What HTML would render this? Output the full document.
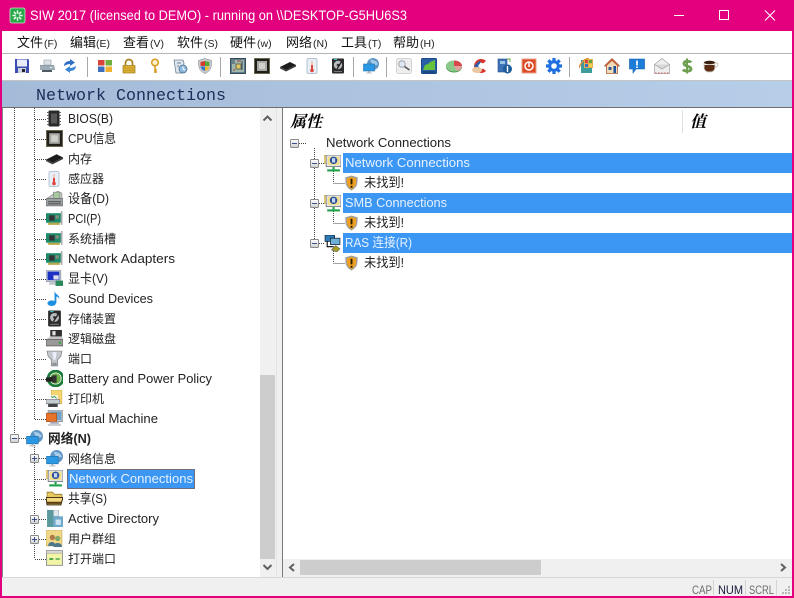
<!DOCTYPE html>
<html><head><meta charset="utf-8"><title>SIW</title>
<style>
html,body{margin:0;padding:0;background:#fff;overflow:hidden;width:794px;height:598px}
svg{display:block}
text{font-family:"Liberation Sans","Noto Sans CJK SC",sans-serif;font-size:13px;fill:#222;white-space:pre}
.c{font-family:"Noto Sans CJK SC","Liberation Sans",sans-serif;font-size:12px}
.m{font-family:"Noto Sans CJK SC","Liberation Sans",sans-serif;font-size:13px;fill:#111}
.ms{font-size:10.5px;fill:#222}
.w{fill:#e6f2ff}
.dot{stroke:#444;stroke-width:1;stroke-dasharray:1 1;fill:none}
</style></head><body>
<svg width="794" height="598" viewBox="0 0 794 598" xmlns="http://www.w3.org/2000/svg">
<defs>
<linearGradient id="band" x1="0" x2="1" y1="0" y2="0"><stop offset="0" stop-color="#a3bbd8"/><stop offset="1" stop-color="#b6cee8"/></linearGradient>
<linearGradient id="bx" x1="0" x2="0" y1="0" y2="1"><stop offset="0" stop-color="#fff"/><stop offset="1" stop-color="#cfcfcf"/></linearGradient>
<symbol id="minus" viewBox="0 0 9 9"><rect x=".5" y=".5" width="8" height="8" rx="1" fill="url(#bx)" stroke="#8a8a8a"/><path d="M2 4.5h5" stroke="#3a4f8a"/></symbol>
<symbol id="plus" viewBox="0 0 9 9"><rect x=".5" y=".5" width="8" height="8" rx="1" fill="url(#bx)" stroke="#8a8a8a"/><path d="M2 4.5h5M4.500 2v5" stroke="#3a4f8a"/></symbol>

<symbol id="floppy" viewBox="0 0 16 16"><path d="M1 1h13l1 1v13H1z" fill="#3c4cb4"/><rect x="3" y="1.500" width="10" height="7" fill="#e8ecf8"/><rect x="4" y="10" width="8" height="5" fill="#cfd3df"/><rect x="8" y="11" width="3" height="3" fill="#223"/></symbol>
<symbol id="printer" viewBox="0 0 16 16"><path d="M5 2h7v5H5z" fill="#dfe3e8" stroke="#8b949c" stroke-width=".6"/><path d="M1 7h14l1 5H1z" fill="#8d9ba8"/><path d="M1 8h14v4H1z" fill="#9eacb8"/><path d="M3 12h10v2H3z" fill="#4f5a64"/><rect x="11" y="9" width="2" height="1" fill="#dfe"/></symbol>
<symbol id="refresh" viewBox="0 0 16 16"><path d="M2 8c0-3.500 3-5 6-5V1l5 3.500L8 8V6C6 6 4 7 2 8z" fill="#2f6fc4"/><path d="M14 8c0 3.500-3 5-6 5v2l-5-3.500L8 8v2c2 0 4-1 6-2z" fill="#3c86d8"/></symbol>
<symbol id="winflag" viewBox="0 0 16 16"><rect x="1" y="2" width="6.500" height="5.500" fill="#d8443a"/><rect x="8.500" y="2" width="6.500" height="5.500" fill="#6fae3c"/><rect x="1" y="8.500" width="6.500" height="5.500" fill="#3d6fc0"/><rect x="8.500" y="8.500" width="6.500" height="5.500" fill="#f0b030"/></symbol>
<symbol id="lock" viewBox="0 0 16 16"><path d="M4.500 8V5a3.500 3.500 0 0 1 7 0v3" fill="none" stroke="#a88420" stroke-width="1.700"/><rect x="2" y="7.500" width="12" height="7.500" fill="#dcae33" stroke="#a07c1c" stroke-width=".7"/><path d="M2 10h12M2 12.500h12" stroke="#b08a20" stroke-width=".6"/></symbol>
<symbol id="key" viewBox="0 0 16 16"><circle cx="8" cy="4.500" r="3.300" fill="#fff2c8" stroke="#d89a20" stroke-width="1.500"/><path d="M8 8v7M8 12h2M8 14h2" stroke="#d89a20" stroke-width="1.600" fill="none"/></symbol>
<symbol id="clean" viewBox="0 0 16 16"><path d="M2 2h9l1 3-1 10H4z" fill="#dfe7ee" stroke="#6f8296" stroke-width=".8"/><circle cx="11" cy="11" r="4" fill="#8fb9dc" stroke="#47698c" stroke-width=".7"/><path d="M11 8.500V11l2 1" stroke="#fff" fill="none"/><path d="M5 5h4M5 8h2" stroke="#6f8296"/></symbol>
<symbol id="shield" viewBox="0 0 16 16"><path d="M8 .5l6.500 2c0 6 0 10-6.500 13-6.500-3-6.500-7-6.500-13z" fill="#c8ccd2" stroke="#777" stroke-width=".5"/><path d="M8 3v5H3.500V4z" fill="#d63a30"/><path d="M8 3l4.500 1v4H8z" fill="#5aa83a"/><path d="M3.500 8.500H8V13c-3-1-4-2.500-4.500-4.500z" fill="#3576c8"/><path d="M8 8.500h4.500C12 10.500 11 12 8 13z" fill="#eeb72c"/></symbol>
<symbol id="board" viewBox="0 0 16 16"><rect x=".5" y=".5" width="15" height="15" fill="#5a7c8c" stroke="#3c4a58"/><rect x="2" y="2" width="12" height="12" fill="#9fb6a8"/><rect x="6" y="6" width="5" height="5" fill="#e0c860" stroke="#665"/><path d="M2 3h3M2 5h3M12 3v9" stroke="#354a68"/><path d="M3 12h2M7 3h4" stroke="#a04040"/></symbol>
<symbol id="cpu" viewBox="0 0 16 16"><rect x=".5" y=".5" width="15" height="15" fill="#1f1f1a" stroke="#6a6650"/><rect x="3" y="3" width="10" height="10" fill="#a8a8a4"/><rect x="5" y="5" width="6" height="6" fill="#d0d0cc"/></symbol>
<symbol id="ram" viewBox="0 0 16 16"><path d="M0 9l10-5 6 3-10 5z" fill="#1c1c1c"/><path d="M0 9l6 3v1.500L0 10.500z" fill="#444"/><path d="M6 12l10-5v1.500l-10 5z" fill="#333"/></symbol>
<symbol id="sensor" viewBox="0 0 16 16"><rect x="3" y="0.500" width="10" height="15" rx="1.500" fill="#e6eef6" stroke="#b8c4d4"/><rect x="7" y="3" width="2" height="8" fill="#f4c4c0"/><rect x="7" y="7" width="2" height="5" fill="#e0443a"/><circle cx="8" cy="12.500" r="1.800" fill="#e0443a"/></symbol>
<symbol id="hdd" viewBox="0 0 16 16"><rect x="2" y=".5" width="12" height="15" rx="1" fill="#2c2c2c"/><circle cx="8" cy="7" r="4.200" fill="#b8bcc0"/><circle cx="8" cy="7" r="1.300" fill="#333"/><path d="M12 3L7 11" stroke="#222" stroke-width="1.300"/><rect x="4" y="1" width="3" height="1" fill="#3cc"/><rect x="4" y="13" width="8" height="1" fill="#777"/></symbol>
<symbol id="net" viewBox="0 0 16 16"><circle cx="10" cy="6" r="6" fill="#5f96c6"/><path d="M7 1.500c3 .5 7 1 8 5l-5 1z" fill="#a8cce8"/><rect x=".5" y="6" width="11" height="7" fill="#2a98e4" stroke="#1e6fa8" stroke-width=".6"/><rect x="5" y="13" width="2" height="1.500" fill="#a0aab4"/><rect x="3" y="14.500" width="6" height="1" fill="#b8c0c8"/></symbol>
<symbol id="search" viewBox="0 0 16 16"><rect x=".5" y=".5" width="15" height="15" rx="2" fill="#eeeeee" stroke="#d4d4d4"/><circle cx="6" cy="6" r="3.300" fill="#dfe8f0" stroke="#9aa6b0"/><path d="M8.500 8.500l5 3.500" stroke="#555" stroke-width="1.600"/></symbol>
<symbol id="green" viewBox="0 0 16 16"><rect x=".5" y=".5" width="15" height="15" rx="1" fill="#2a5fa8" stroke="#1b4a8c"/><path d="M2 12l2-5 3-1 2-2 5-2v10z" fill="#66c23c"/><path d="M2 14h12" stroke="#14315c"/></symbol>
<symbol id="pie" viewBox="0 0 16 16"><ellipse cx="8" cy="9" rx="8" ry="5.500" fill="#4e9a4e"/><ellipse cx="8" cy="8" rx="8" ry="5.500" fill="#88c888"/><path d="M8 8V2.500A8 5.500 0 0 1 16 8z" fill="#d84848"/><path d="M8 8l8 0A8 5.500 0 0 1 11 13z" fill="#e4a0a0"/></symbol>
<symbol id="cc" viewBox="0 0 16 16"><path d="M14 3A7 7 0 1 0 14 13L11 10.500A3.500 3.500 0 1 1 11 5.500z" fill="#d8342c"/><path d="M2 8l5-5 2 1-3 4 3 3-2 1z" fill="#2c5fa8"/><ellipse cx="5" cy="12" rx="5" ry="3" fill="#eac8a0"/></symbol>
<symbol id="bbox" viewBox="0 0 16 16"><rect x="1" y="1" width="9" height="13" fill="#3c72b8" stroke="#254f88" stroke-width=".6"/><rect x="3" y="3" width="5" height="3" fill="#9cc4e4"/><circle cx="10.500" cy="11" r="4.500" fill="#1e5c98"/><path d="M10.500 8v6" stroke="#fff" stroke-width="1.400"/><path d="M10 1h3v3" stroke="#5aa83a" fill="none"/></symbol>
<symbol id="power" viewBox="0 0 16 16"><rect x="1" y="1" width="14" height="14" fill="#dc4a28" stroke="#e8a088"/><circle cx="8" cy="8" r="4" fill="none" stroke="#fff" stroke-width="1.500"/><path d="M8 4v5" stroke="#fff" stroke-width="1.500"/></symbol>
<symbol id="gear" viewBox="0 0 16 16"><circle cx="8" cy="8" r="4.300" fill="none" stroke="#1f6fe0" stroke-width="3"/><g stroke="#1f6fe0" stroke-width="3.200"><path d="M8 0v3M8 13v3M0 8h3M13 8h3M2.300 2.300l2.100 2.100M11.600 11.600l2.100 2.100M13.700 2.300l-2.100 2.100M4.400 11.600l-2.100 2.100"/></g></symbol>
<symbol id="app" viewBox="0 0 16 16"><rect x="2" y="2" width="11" height="13" fill="#3e9c9c"/><rect x="5" y="1" width="9" height="9" fill="#e6b050"/><rect x="6" y="2" width="3" height="3" fill="#d8443a"/><rect x="10" y="2" width="3" height="3" fill="#5aa83a"/><rect x="6" y="6" width="3" height="3" fill="#3d6fc0"/><rect x="10" y="6" width="3" height="3" fill="#f4d050"/><path d="M0 10C2 4 6 1 10 0" stroke="#e08a30" stroke-width="1.400" fill="none"/></symbol>
<symbol id="house" viewBox="0 0 16 16"><path d="M8 .5L.5 8H2.500v7.500h11V8h2z" fill="#f0dcb8" stroke="#a8603c" stroke-width=".8"/><path d="M8 .5L.5 8 2 8.500 8 3l6 5.500L15.500 8z" fill="#c8603c"/><rect x="4.500" y="9" width="3" height="3" fill="#34568c"/><rect x="9.500" y="8" width="2.500" height="7" fill="#1c4f9c"/></symbol>
<symbol id="bubble" viewBox="0 0 16 16"><path d="M.5 1h15v10H7l-3 4v-4H.5z" fill="#1c7cd8" stroke="#0e5cac" stroke-width=".6"/><path d="M8 2.500v5M8 8.500v1.500" stroke="#fff" stroke-width="1.700"/></symbol>
<symbol id="mail" viewBox="0 0 16 16"><path d="M.5 6.500L8 .5l7.500 6v9H.5z" fill="#eeeeee" stroke="#a0a0a0" stroke-width=".7"/><path d="M.5 6.500L8 11l7.500-4.500" fill="#d8d8d8" stroke="#9a9a9a" stroke-width=".7"/><path d="M1 15h14" stroke="#d86060" stroke-dasharray="1.500 1.500"/></symbol>
<symbol id="dollar" viewBox="0 0 16 16"><path d="M12 4.500C11 3 5 2.500 5 5.500S12 8 12 11 5.500 13.500 4 11.500" fill="none" stroke="#6ea050" stroke-width="2.800"/><path d="M8 .5v15" stroke="#6ea050" stroke-width="2"/></symbol>
<symbol id="cup" viewBox="0 0 16 16"><path d="M1 4h11v5c0 3-2 5-4 5H5c-2 0-4-2-4-5z" fill="#f0e8e0" stroke="#b8b0a8" stroke-width=".5"/><ellipse cx="6.500" cy="4.500" rx="5.500" ry="1.800" fill="#3a2010"/><path d="M1.500 7h10v3c0 2-2 3.500-3.500 3.500H5C3.500 13.500 1.500 12 1.500 10z" fill="#5a2c14"/><path d="M12 5h2c1.500 0 1.500 4-2 4" fill="none" stroke="#c8c0b8"/></symbol>

<symbol id="bios" viewBox="0 0 16 16"><rect x="2.500" y="0" width="11" height="16" rx="1" fill="#2a2a2a"/><rect x="5" y="3" width="6" height="10" fill="#585858"/><path d="M1 2h2M1 5h2M1 8h2M1 11h2M1 14h2M13 2h2M13 5h2M13 8h2M13 11h2M13 14h2" stroke="#666"/></symbol>
<symbol id="pci" viewBox="0 0 16 16"><rect x="0" y="3" width="14" height="9" fill="#1f8a6a"/><rect x="3" y="5" width="5" height="5" fill="#333"/><rect x="9" y="5" width="3" height="3" fill="#8c8c7c"/><rect x="14" y="1" width="1.500" height="13" fill="#aaa"/><path d="M2 12h11v2H2z" fill="#b8a848"/></symbol>
<symbol id="dev" viewBox="0 0 16 16"><path d="M1 8L11 1l4 2v5z" fill="#c8c8c8" stroke="#777" stroke-width=".5"/><rect x="7" y="2" width="6" height="6" fill="#a8c8a0" stroke="#777" stroke-width=".5"/><rect x="0" y="8" width="16" height="7" fill="#9aa0a4" stroke="#555" stroke-width=".5"/><path d="M2 11h12M2 13h12" stroke="#555"/></symbol>
<symbol id="mon" viewBox="0 0 16 16"><rect x="0" y="0" width="14" height="11" fill="#c0c8d4" stroke="#7c8490" stroke-width=".5"/><rect x="1.500" y="1.500" width="11" height="8" fill="#1c30c4"/><path d="M7 5h5v4H7z" fill="#dde"/><rect x="3" y="11" width="8" height="3" fill="#c4c8cc"/><rect x="9" y="10" width="7" height="5" fill="#2c8a5a"/></symbol>
<symbol id="note" viewBox="0 0 16 16"><ellipse cx="5" cy="13" rx="4.500" ry="3" fill="#1f8fe0"/><path d="M8 13V0c1 4 6 4 5 9-.5-3-3-3-3-3v7z" fill="#1f8fe0"/></symbol>
<symbol id="drive" viewBox="0 0 16 16"><rect x="4" y="0" width="11" height="7" fill="#303030"/><rect x="6" y="1" width="3" height="4" fill="#dfdfdf"/><path d="M0 9l4-3h11l1 3z" fill="#c4c4c4"/><rect x="0" y="9" width="16" height="6" fill="#9a9a9a" stroke="#444" stroke-width=".6"/><rect x="12" y="11" width="2" height="2" fill="#3a3"/></symbol>
<symbol id="port" viewBox="0 0 16 16"><path d="M1 1h14l-1 5-3 3v6H5V9L2 6z" fill="#c4c8cc" stroke="#7e8488" stroke-width=".7"/><path d="M6 2l1 7h2l1-7z" fill="#eef"/><rect x="6" y="12" width="4" height="3" fill="#8e9498"/></symbol>
<symbol id="batt" viewBox="0 0 16 16"><circle cx="9" cy="8" r="7" fill="none" stroke="#1a7a3a" stroke-width="2.600"/><circle cx="9" cy="8" r="5" fill="#6cb04a"/><path d="M0 8l9-3v6l-9-1z" fill="#1c1c1c"/><rect x="0" y="7" width="9" height="4" fill="#222"/><rect x="6" y="5" width="4" height="7" fill="#333"/></symbol>
<symbol id="pr2" viewBox="0 0 16 16"><rect x="5" y="0" width="10" height="13" fill="#f4d470" stroke="#cfa83c" stroke-width=".5"/><rect x="3" y="5" width="8" height="4" fill="#fff"/><path d="M0 9h13v4H0z" fill="#c4ccd0" stroke="#667" stroke-width=".5"/><path d="M5 6l1 1 2-1 2 2" stroke="#3a9a5c" fill="none"/><rect x="2" y="13" width="9" height="3" fill="#444"/></symbol>
<symbol id="vm" viewBox="0 0 16 16"><rect x="2" y="0" width="14" height="11" fill="#c0c4c8" stroke="#7a7e84" stroke-width=".6"/><rect x="3.500" y="1.500" width="11" height="8" fill="#6ea0c8"/><rect x="0" y="3" width="10" height="8" fill="#e8742a" stroke="#9a4a14" stroke-width=".6"/><rect x="4" y="11" width="8" height="2" fill="#aab"/><rect x="2" y="13" width="12" height="2" fill="#c8ccd0"/></symbol>
<symbol id="conn" viewBox="0 0 16 16"><rect x="0" y="0" width="7" height="8" fill="#f4d87c" stroke="#b89c3c" stroke-width=".5"/><rect x="2" y="0" width="14" height="11" fill="#dfe4ea" stroke="#556" stroke-width=".6"/><rect x="3.500" y="1.500" width="11" height="8" fill="#f4e08c"/><circle cx="9" cy="5" r="3.500" fill="#2850a0"/><rect x="7.500" y="3" width="3" height="4" fill="#c8d8f0"/><rect x="8" y="11" width="2" height="2.500" fill="#1fa04a"/><rect x="3" y="13.500" width="12" height="2" fill="#1fa04a"/></symbol>
<symbol id="folder" viewBox="0 0 16 16"><path d="M1 2h5l2 2h7v3H1z" fill="#e8c860" stroke="#8a6c20" stroke-width=".6"/><path d="M0 7h16l-2 7H1z" fill="#f4d880" stroke="#2c2008" stroke-width=".9"/><path d="M1 13h13l.5-2H1z" fill="#5a3c10"/></symbol>
<symbol id="ad" viewBox="0 0 16 16"><rect x="1" y="0" width="6" height="16" fill="#5a9a9c"/><rect x="7" y="0" width="5" height="6" fill="#dfe8ec" stroke="#88a" stroke-width=".4"/><rect x="7" y="6" width="9" height="10" fill="#6ea8cc"/><rect x="9" y="9" width="5" height="5" fill="#cfe4f0"/></symbol>
<symbol id="users" viewBox="0 0 16 16"><rect x="0" y="0" width="15" height="15" fill="#f0d888" stroke="#c0a858" stroke-width=".6"/><circle cx="6" cy="7" r="2.500" fill="#b07848"/><circle cx="11" cy="8" r="2.500" fill="#80a868"/><path d="M2 15c0-5 7-5 7 0zM7 16c0-5 8-5 8 0z" fill="#4c7a8c"/></symbol>
<symbol id="open" viewBox="0 0 16 16"><rect x=".5" y=".5" width="15" height="14" fill="#f2f4a8" stroke="#9a9a9a"/><rect x=".5" y=".5" width="15" height="2.500" fill="#d8d8d8" stroke="#9a9a9a" stroke-width=".5"/><path d="M3 8.500h4M9 8.500h4" stroke="#2a9a3a" stroke-width="1.200"/><circle cx="5" cy="8.500" r="1" fill="#2a9a3a"/></symbol>
<symbol id="warn" viewBox="0 0 16 16"><path d="M8 0l6.500 2c0 6 .5 10-6.500 14C1 12 1.500 8 1.500 2z" fill="#9aa0a4"/><path d="M8 1.500l5 1.500c0 5 .5 8-5 11.500C2.500 11 3 8 3 3z" fill="#f0a020"/><path d="M8 3.500v6M8 11v2" stroke="#2a1a00" stroke-width="2"/></symbol>
<symbol id="ras" viewBox="0 0 16 16"><rect x="1" y="0" width="9" height="6" fill="#2c7ab8" stroke="#123" stroke-width=".7"/><rect x="6" y="3" width="9" height="6" fill="#6cb0d8" stroke="#123" stroke-width=".7"/><path d="M3 6v5h6" stroke="#000" fill="none"/><path d="M7 14l4-4 4 3-3 3z" fill="#a8a020" stroke="#555" stroke-width=".5"/></symbol>
</defs>

<!-- window frame -->
<rect width="794" height="598" fill="#e3007f"/>
<rect x="2" y="31" width="790" height="565" fill="#fff"/>

<!-- title bar -->
<rect x="10" y="8" width="15" height="15" rx="2" fill="#2aa84a" stroke="#bfe8c8" stroke-width=".8"/>
<g stroke="#eafff0" stroke-width="1.500" stroke-linecap="round"><path d="M17.500 11v2M17.500 18v2M13 15.500h2M20 15.500h2M14.300 12.300l1.400 1.400M19.300 17.300l1.400 1.400M20.700 12.300l-1.400 1.400M15.700 17.300l-1.400 1.400"/></g>
<text x="30" y="20" textLength="377" lengthAdjust="spacingAndGlyphs" style="font-size:14px;fill:#fff">SIW 2017 (licensed to DEMO) - running on \\DESKTOP-G5HU6S3</text>
<path d="M674 15.500h10" stroke="#fff"/>
<rect x="719.500" y="10.500" width="9" height="9" fill="none" stroke="#fff"/>
<path d="M765 10.500l10 10M775 10.500l-10 10" stroke="#fff" stroke-width="1.100"/>

<!-- menu -->
<text x="17" y="47" class="m">文件</text><text x="44" y="47" class="ms">(F)</text>
<text x="70" y="47" class="m">编辑</text><text x="96" y="47" class="ms">(E)</text>
<text x="123" y="47" class="m">查看</text><text x="150" y="47" class="ms">(V)</text>
<text x="177" y="47" class="m">软件</text><text x="204" y="47" class="ms">(S)</text>
<text x="230" y="47" class="m">硬件</text><text x="257" y="47" class="ms">(w)</text>
<text x="286" y="47" class="m">网络</text><text x="313" y="47" class="ms">(N)</text>
<text x="341" y="47" class="m">工具</text><text x="368" y="47" class="ms">(T)</text>
<text x="393" y="47" class="m">帮助</text><text x="420" y="47" class="ms">(H)</text>
<rect x="2" y="53" width="790" height="1" fill="#b4b4b4"/>

<!-- toolbar -->
<g>
<use href="#floppy" x="14" y="58" width="16" height="16"/>
<use href="#printer" x="39" y="58" width="16" height="16"/>
<use href="#refresh" x="62" y="58" width="16" height="16"/>
<use href="#winflag" x="97" y="58" width="16" height="16"/>
<use href="#lock" x="121" y="58" width="16" height="16"/>
<use href="#key" x="147" y="58" width="16" height="16"/>
<use href="#clean" x="172" y="58" width="16" height="16"/>
<use href="#shield" x="197" y="58" width="16" height="16"/>
<use href="#board" x="230" y="58" width="16" height="16"/>
<use href="#cpu" x="254" y="58" width="16" height="16"/>
<use href="#ram" x="280" y="58" width="16" height="16"/>
<use href="#sensor" x="304" y="58" width="16" height="16"/>
<use href="#hdd" x="330" y="58" width="16" height="16"/>
<use href="#net" x="363" y="58" width="16" height="16"/>
<use href="#search" x="396" y="58" width="16" height="16"/>
<use href="#green" x="421" y="58" width="16" height="16"/>
<use href="#pie" x="446" y="58" width="16" height="16"/>
<use href="#cc" x="472" y="58" width="16" height="16"/>
<use href="#bbox" x="497" y="58" width="16" height="16"/>
<use href="#power" x="521" y="58" width="16" height="16"/>
<use href="#gear" x="546" y="58" width="16" height="16"/>
<use href="#app" x="579" y="58" width="16" height="16"/>
<use href="#house" x="604" y="58" width="16" height="16"/>
<use href="#bubble" x="629" y="58" width="16" height="16"/>
<use href="#mail" x="654" y="58" width="16" height="16"/>
<use href="#dollar" x="679" y="58" width="16" height="16"/>
<use href="#cup" x="703" y="58" width="16" height="16"/>
</g>
<g fill="#a8a8a8"><rect x="87" y="57" width="1" height="20"/><rect x="220" y="57" width="1" height="20"/><rect x="353" y="57" width="1" height="20"/><rect x="386" y="57" width="1" height="20"/><rect x="569" y="57" width="1" height="20"/></g>

<!-- header band -->
<rect x="2" y="80" width="790" height="27" fill="url(#band)"/>
<rect x="2" y="80" width="790" height="1" fill="#c4c4c4"/>
<text x="36" y="100" textLength="190" lengthAdjust="spacingAndGlyphs" style="font-family:'Liberation Mono',monospace;font-size:17px;fill:#1a2e58">Network Connections</text>
<rect x="2" y="107" width="790" height="1" fill="#6e6e6e"/>

<!-- panes -->
<rect x="2" y="108" width="1" height="469" fill="#8a8a8a"/>
<rect x="260" y="108" width="16" height="469" fill="#f0f0f0"/>
<rect x="260" y="375" width="15" height="184" fill="#cdcdcd"/>
<path d="M263.500 120.500l4-4 4 4" fill="none" stroke="#606060" stroke-width="2"/>
<path d="M263.500 565l4 4 4-4" fill="none" stroke="#606060" stroke-width="2"/>
<rect x="276" y="108" width="6" height="470" fill="#f0f0f0"/>
<rect x="282" y="108" width="1" height="470" fill="#7a7a7a"/>
<rect x="276" y="108" width="1" height="470" fill="#e4e4e4"/>

<!-- left tree lines -->
<path class="dot" d="M14.500 108V434M34.500 108V419M34.500 445V559M19 438.500H26"/>
<path class="dot" d="M35 119.500h11M35 139.500h11M35 159.500h11M35 179.500h11M35 199.500h11M35 219.500h11M35 239.500h11M35 259.500h11M35 279.500h11M35 299.500h11M35 319.500h11M35 339.500h11M35 359.500h11M35 379.500h11M35 399.500h11M35 419.500h11M39 458.500h7M35 479.500h11M35 499.500h11M39 519.500h7M39 539.500h7M35 559.500h11"/>

<!-- left tree icons -->
<use href="#bios" x="46" y="110" width="16" height="17"/>
<use href="#cpu" x="46" y="130" width="17" height="17"/>
<use href="#ram" x="46" y="150" width="17" height="17"/>
<use href="#sensor" x="46" y="170" width="16" height="18"/>
<use href="#dev" x="46" y="190" width="17" height="17"/>
<use href="#pci" x="46" y="210" width="17" height="17"/>
<use href="#pci" x="46" y="230" width="17" height="17"/>
<use href="#pci" x="46" y="250" width="17" height="17"/>
<use href="#mon" x="46" y="270" width="17" height="17"/>
<use href="#note" x="47" y="290" width="15" height="17"/>
<use href="#hdd" x="46" y="310" width="17" height="17"/>
<use href="#drive" x="46" y="330" width="17" height="17"/>
<use href="#port" x="46" y="350" width="17" height="17"/>
<use href="#batt" x="46" y="370" width="17" height="17"/>
<use href="#pr2" x="46" y="390" width="17" height="17"/>
<use href="#vm" x="46" y="410" width="17" height="17"/>
<use href="#minus" x="10" y="434" width="9" height="9"/>
<use href="#net" x="26" y="430" width="17" height="17"/>
<use href="#plus" x="30" y="454" width="9" height="9"/>
<use href="#net" x="46" y="450" width="17" height="17"/>
<use href="#conn" x="46" y="470" width="17" height="17"/>
<use href="#folder" x="46" y="490" width="17" height="17"/>
<use href="#plus" x="30" y="515" width="9" height="9"/>
<use href="#ad" x="46" y="510" width="17" height="17"/>
<use href="#plus" x="30" y="535" width="9" height="9"/>
<use href="#users" x="46" y="530" width="17" height="17"/>
<use href="#open" x="46" y="550" width="17" height="17"/>

<!-- left tree text -->
<text x="68" y="123" textLength="45" lengthAdjust="spacingAndGlyphs">BIOS(B)</text>
<text x="68" y="143" textLength="48" lengthAdjust="spacingAndGlyphs">CPU信息</text>
<text x="68" y="163" class="c">内存</text>
<text x="68" y="183" class="c">感应器</text>
<text x="68" y="203" textLength="41" lengthAdjust="spacingAndGlyphs">设备(D)</text>
<text x="68" y="223" textLength="33" lengthAdjust="spacingAndGlyphs">PCI(P)</text>
<text x="68" y="243" class="c">系统插槽</text>
<text x="68" y="263" textLength="107" lengthAdjust="spacingAndGlyphs">Network Adapters</text>
<text x="68" y="283" textLength="40" lengthAdjust="spacingAndGlyphs">显卡(V)</text>
<text x="68" y="303" textLength="85" lengthAdjust="spacingAndGlyphs">Sound Devices</text>
<text x="68" y="323" class="c">存储装置</text>
<text x="68" y="343" class="c">逻辑磁盘</text>
<text x="68" y="363" class="c">端口</text>
<text x="68" y="383" textLength="144" lengthAdjust="spacingAndGlyphs">Battery and Power Policy</text>
<text x="68" y="403" class="c">打印机</text>
<text x="68" y="423" textLength="90" lengthAdjust="spacingAndGlyphs">Virtual Machine</text>
<text x="48" y="443" textLength="43" lengthAdjust="spacingAndGlyphs" style="font-weight:bold">网络(N)</text>
<text x="68" y="463" class="c">网络信息</text>
<rect x="67" y="469" width="128" height="20" fill="#3c96f4"/>
<rect x="67.500" y="469.500" width="127" height="19" fill="none" stroke="#a04800" stroke-dasharray="1 1"/>
<text x="69" y="483" textLength="124" lengthAdjust="spacingAndGlyphs" class="w">Network Connections</text>
<text x="68" y="503" textLength="39" lengthAdjust="spacingAndGlyphs">共享(S)</text>
<text x="68" y="523" textLength="91" lengthAdjust="spacingAndGlyphs">Active Directory</text>
<text x="68" y="543" class="c">用户群组</text>
<text x="68" y="563" class="c">打开端口</text>

<!-- right pane -->
<text x="290" y="127" style="font-family:'Noto Serif CJK SC','Noto Sans CJK SC',serif;font-size:16px;font-style:italic;font-weight:bold;fill:#000">属性</text>
<text x="690" y="127" style="font-family:'Noto Serif CJK SC','Noto Sans CJK SC',serif;font-size:16px;font-style:italic;font-weight:bold;fill:#000">值</text>
<rect x="682" y="110" width="1" height="23" fill="#e0e0e0"/>

<use href="#minus" x="290" y="139" width="9" height="9"/>
<path class="dot" d="M299 143.500h8M314.500 148V159M314.500 168V199M314.500 208V239M319 163.500h5M319 203.500h5M319 243.500h5M333.500 171V183M333.500 183.500h11M333.500 211V223M333.500 223.500h11M333.500 251V263M333.500 263.500h11"/>
<text x="326" y="147" textLength="125" lengthAdjust="spacingAndGlyphs">Network Connections</text>

<rect x="343" y="153" width="449" height="20" fill="#3c96f4"/>
<rect x="343" y="193" width="449" height="20" fill="#3c96f4"/>
<rect x="343" y="233" width="449" height="20" fill="#3c96f4"/>
<use href="#minus" x="310" y="159" width="9" height="9"/>
<use href="#minus" x="310" y="199" width="9" height="9"/>
<use href="#minus" x="310" y="239" width="9" height="9"/>
<use href="#conn" x="324" y="155" width="17" height="17"/>
<use href="#conn" x="324" y="195" width="17" height="17"/>
<use href="#ras" x="324" y="235" width="17" height="17"/>
<use href="#warn" x="344" y="175" width="15" height="16"/>
<use href="#warn" x="344" y="215" width="15" height="16"/>
<use href="#warn" x="344" y="255" width="15" height="16"/>
<text x="345" y="167" textLength="125" lengthAdjust="spacingAndGlyphs" class="w">Network Connections</text>
<text x="345" y="207" textLength="102" lengthAdjust="spacingAndGlyphs" class="w">SMB Connections</text>
<text x="345" y="247" textLength="67" lengthAdjust="spacingAndGlyphs" class="w">RAS 连接(R)</text>
<text x="364" y="187" textLength="40" lengthAdjust="spacingAndGlyphs">未找到!</text>
<text x="364" y="227" textLength="40" lengthAdjust="spacingAndGlyphs">未找到!</text>
<text x="364" y="267" textLength="40" lengthAdjust="spacingAndGlyphs">未找到!</text>

<!-- right h scrollbar -->
<rect x="283" y="559" width="509" height="18" fill="#f0f0f0"/>
<rect x="300" y="560" width="241" height="15" fill="#cdcdcd"/>
<path d="M294 564l-4 3.500 4 3.500" fill="none" stroke="#606060" stroke-width="2"/>
<path d="M781 564l4 3.500-4 3.500" fill="none" stroke="#606060" stroke-width="2"/>

<!-- status bar -->
<rect x="2" y="577" width="790" height="19" fill="#f0f0f0"/>
<rect x="2" y="577" width="790" height="1" fill="#d8d8d8"/>
<text x="692" y="594" textLength="20" lengthAdjust="spacingAndGlyphs" style="font-size:12px;fill:#6d6d6d">CAP</text>
<text x="718" y="594" textLength="25" lengthAdjust="spacingAndGlyphs" style="font-size:12px;fill:#1a1a3c">NUM</text>
<text x="749" y="594" textLength="25" lengthAdjust="spacingAndGlyphs" style="font-size:12px;fill:#6d6d6d">SCRL</text>
<g fill="#d4d4d4"><rect x="713" y="580" width="1" height="15"/><rect x="745" y="580" width="1" height="15"/><rect x="776" y="580" width="1" height="15"/></g>
<g fill="#b8b8b8"><rect x="788" y="586" width="2" height="2"/><rect x="785" y="589" width="2" height="2"/><rect x="788" y="589" width="2" height="2"/><rect x="782" y="592" width="2" height="2"/><rect x="785" y="592" width="2" height="2"/><rect x="788" y="592" width="2" height="2"/></g>
</svg>
</body></html>
